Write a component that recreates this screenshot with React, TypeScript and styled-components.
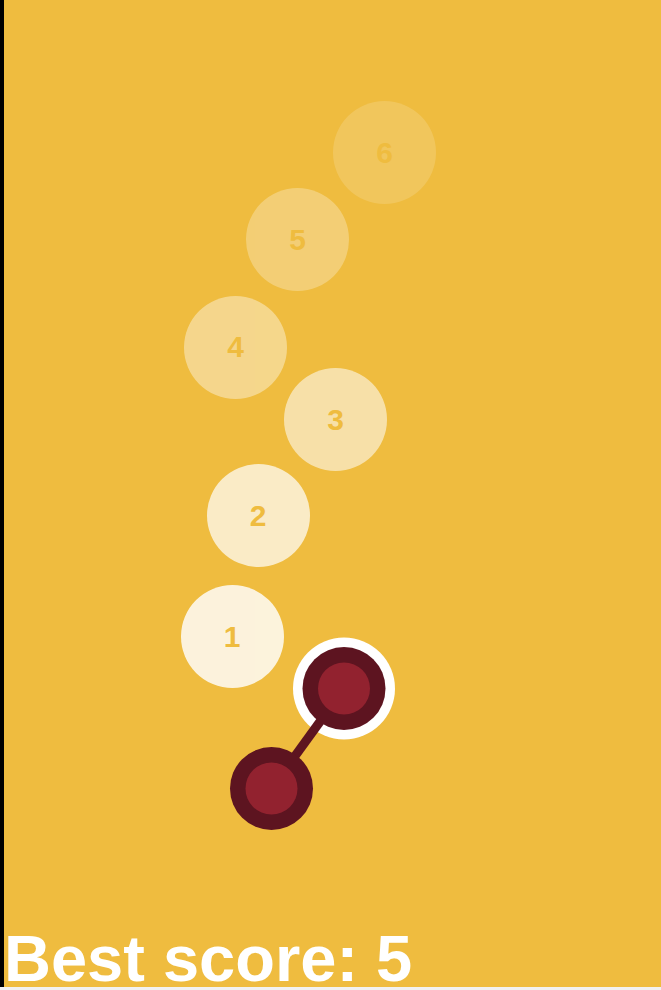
import React from 'react';
import styled, { createGlobalStyle } from 'styled-components';

const GlobalStyle = createGlobalStyle`
  html, body {
    margin: 0;
    padding: 0;
    background: #f1f1f1;
  }
  body {
    font-family: 'Liberation Sans', Arial, sans-serif;
  }
`;

const YELLOW = '#efbc3f';
const DARK_RED = '#5d1420';
const RED = '#92222f';

// trail of previous positions, newest first
const trail = [
  { n: 1, x: 228, y: 636.5, alpha: 0.82 },
  { n: 2, x: 254, y: 515.5, alpha: 0.7 },
  { n: 3, x: 331.5, y: 419.5, alpha: 0.55 },
  { n: 4, x: 231.5, y: 347, alpha: 0.4 },
  { n: 5, x: 293.5, y: 239.5, alpha: 0.28 },
  { n: 6, x: 380.5, y: 152.5, alpha: 0.15 },
];

const Screen = styled.div`
  box-sizing: border-box;
  height: 987px;
  display: flex;
  flex-direction: column;
  background: ${YELLOW};
  border-left: 4px solid #000;
`;

const Board = styled.div`
  position: relative;
  flex: 1;
`;

const Bubble = styled.div<{ $alpha: number }>`
  position: absolute;
  width: 103px;
  height: 103px;
  margin: -51.5px 0 0 -51.5px;
  border-radius: 50%;
  background: #fff;
  opacity: ${(p) => p.$alpha};
  display: flex;
  align-items: center;
  justify-content: center;
  color: ${YELLOW};
  font-size: 30px;
  font-weight: 700;
`;

const Rig = styled.svg`
  position: absolute;
  left: 0;
  top: 0;
  overflow: visible;
`;

const Score = styled.div`
  color: #fff;
  font-size: 65px;
  font-weight: 700;
  line-height: 56px;
  white-space: nowrap;
`;

// two linked balls; the active one carries a white ring
const Pendulum: React.FC<{ ax: number; ay: number; bx: number; by: number }> = ({ ax, ay, bx, by }) => (
  <Rig width="657" height="931" viewBox="0 0 657 931">
    <circle cx={ax} cy={ay} r={51} fill="#fff" />
    <line x1={ax} y1={ay} x2={bx} y2={by} stroke={DARK_RED} strokeWidth={9} />
    <circle cx={ax} cy={ay} r={41.5} fill={DARK_RED} />
    <circle cx={ax} cy={ay} r={26} fill={RED} />
    <circle cx={bx} cy={by} r={41.5} fill={DARK_RED} />
    <circle cx={bx} cy={by} r={26} fill={RED} />
  </Rig>
);

export default function App() {
  return (
    <>
      <GlobalStyle />
      <Screen>
        <Board>
          {trail.map((t) => (
            <Bubble key={t.n} $alpha={t.alpha} style={{ left: t.x, top: t.y }}>
              {t.n}
            </Bubble>
          ))}
          <Pendulum ax={340} ay={688.5} bx={267.5} by={788.5} />
        </Board>
        <Score>Best score: 5</Score>
      </Screen>
    </>
  );
}
